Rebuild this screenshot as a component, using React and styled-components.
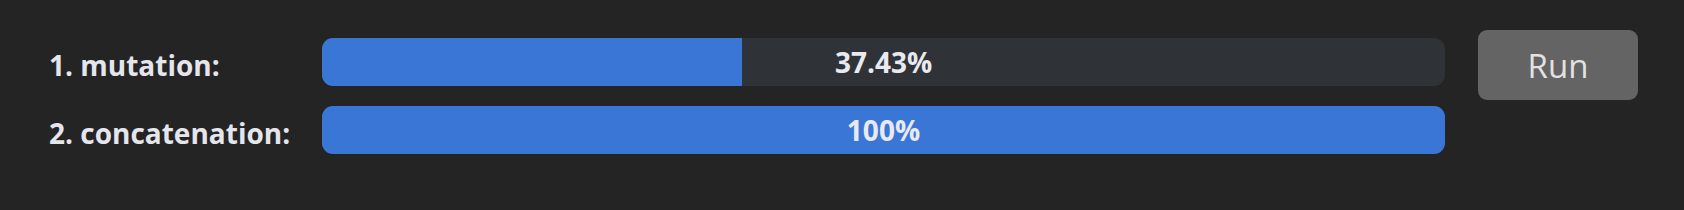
import React from "react";
import styled, { createGlobalStyle } from "styled-components";

const Global = createGlobalStyle`
  html, body { margin: 0; padding: 0; background: #242424; }
  body { font-family: "Open Sans", "Liberation Sans", sans-serif; }
`;

const Page = styled.div`
  display: flex;
  align-items: flex-start;
  padding: 30px 0 0 49px;
  height: 210px;
  box-sizing: border-box;
  background: #242424;
`;

const Rows = styled.div`
  display: flex;
  flex-direction: column;
  gap: 20px;
  margin-top: 8px;
`;

const Row = styled.div`
  display: grid;
  grid-template-columns: 273px 1123px;
  align-items: center;
`;

const Label = styled.div`
  color: #e4e6ec;
  font-weight: 700;
  font-size: 28px;
  line-height: 1;
  padding-top: 6px;
`;

const Track = styled.div`
  position: relative;
  height: 48px;
  border-radius: 11px;
  background: #2f3337;
  overflow: hidden;
  display: flex;
  align-items: center;
  justify-content: center;
`;

const Fill = styled.div`
  position: absolute;
  left: 0;
  top: 0;
  bottom: 0;
  background: #3a76d6;
`;

const Percent = styled.span`
  position: relative;
  color: #e8eaf0;
  font-weight: 700;
  font-size: 28px;
`;

const RunButton = styled.button`
  margin-left: 33px;
  width: 160px;
  height: 70px;
  border: none;
  border-radius: 9px;
  background: #646464;
  color: #e2e2e2;
  font-family: "Open Sans", "Liberation Sans", sans-serif;
  font-size: 33px;
  font-weight: 400;
  cursor: pointer;
`;

const data = [
  { name: "1. mutation:", value: 37.43, text: "37.43%" },
  { name: "2. concatenation:", value: 100, text: "100%" },
];

export default function App() {
  return (
    <>
      <Global />
      <Page>
        <Rows>
          {data.map((d) => (
            <Row key={d.name}>
              <Label>{d.name}</Label>
              <Track>
                <Fill style={{ width: `${d.value}%` }} />
                <Percent>{d.text}</Percent>
              </Track>
            </Row>
          ))}
        </Rows>
        <RunButton>Run</RunButton>
      </Page>
    </>
  );
}
